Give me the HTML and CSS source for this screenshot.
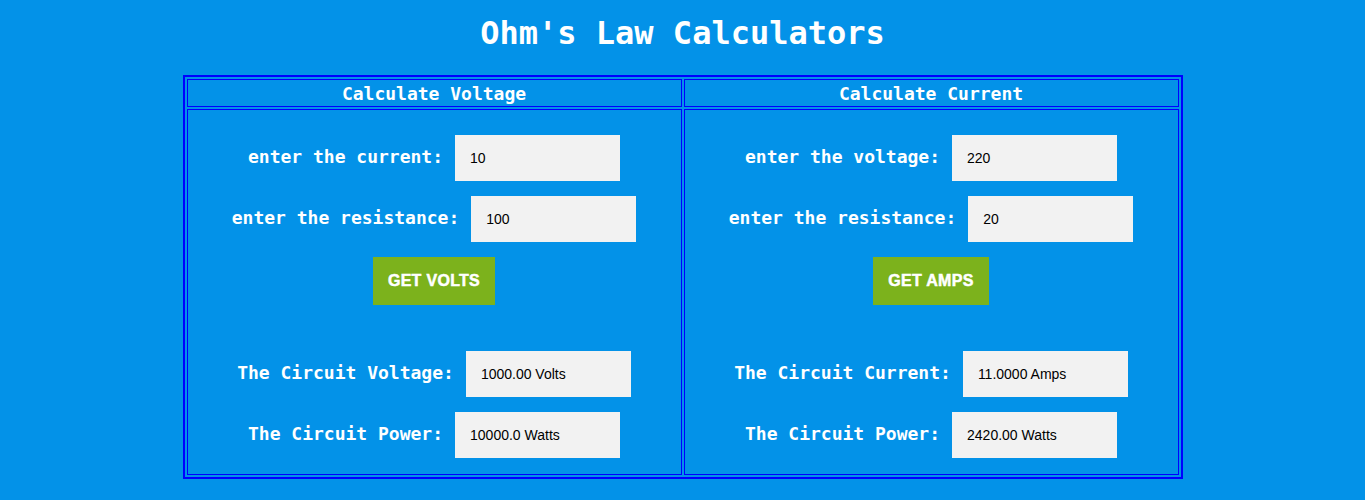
FILE: index.html
```html
<!DOCTYPE html>
<html>
<head>
<meta charset="utf-8">
<title>Ohm's Law Calculators</title>
<link rel="stylesheet" href="styles.css">
</head>
<body>
<h1 class="title">Ohm's Law Calculators</h1>
<table class="calc">
  <tr>
    <th class="head">Calculate Voltage</th>
    <th class="head">Calculate Current</th>
  </tr>
  <tr>
    <td class="cell">
      <div class="form">
        <div class="row"><label class="label">enter the current:</label><input class="field" type="text" value="10"></div>
        <div class="row"><label class="label">enter the resistance:</label><input class="field" type="text" value="100"></div>
        <div class="row btn-row"><button class="btn">GET VOLTS</button></div>
        <div class="row"><label class="label">The Circuit Voltage:</label><input class="field" type="text" value="1000.00 Volts"></div>
        <div class="row"><label class="label">The Circuit Power:</label><input class="field" type="text" value="10000.0 Watts"></div>
      </div>
    </td>
    <td class="cell">
      <div class="form">
        <div class="row"><label class="label">enter the voltage:</label><input class="field" type="text" value="220"></div>
        <div class="row"><label class="label">enter the resistance:</label><input class="field" type="text" value="20"></div>
        <div class="row btn-row"><button class="btn">GET AMPS</button></div>
        <div class="row"><label class="label">The Circuit Current:</label><input class="field" type="text" value="11.0000 Amps"></div>
        <div class="row"><label class="label">The Circuit Power:</label><input class="field" type="text" value="2420.00 Watts"></div>
      </div>
    </td>
  </tr>
</table>
</body>
</html>
```
FILE: styles.css
```css
html, body {
  margin: 0;
  padding: 0;
  background: #0392e8;
  height: 100%;
}
body {
  font-family: "DejaVu Sans Mono", monospace;
  color: #ffffff;
}
.title {
  margin: 15px 0 23px;
  font-size: 32px;
  line-height: 37px;
  font-weight: bold;
  text-align: center;
}
.calc {
  width: 1000px;
  margin: 0 auto;
  border: 2px solid #0000ff;
  border-spacing: 2px;
  table-layout: fixed;
}
.head {
  border: 1px solid #0000ff;
  padding: 3px 0 1px;
  height: 22px;
  line-height: 22px;
  font-size: 18px;
  font-weight: bold;
  text-align: center;
}
.cell {
  border: 1px solid #0000ff;
  padding: 25px 0 16px;
  vertical-align: top;
}
.form {
  display: flex;
  flex-direction: column;
  gap: 15px;
}
.row {
  display: flex;
  justify-content: center;
  align-items: center;
  gap: 12px;
}
.btn-row {
  margin-bottom: 31px;
}
.label {
  font-size: 18px;
  font-weight: bold;
  white-space: nowrap;
  padding-bottom: 3px;
}
.field {
  width: 165px;
  height: 46px;
  box-sizing: border-box;
  border: none;
  padding: 0 15px;
  margin: 0;
  background: #f2f2f2;
  font-family: "Liberation Sans", Arial, sans-serif;
  font-size: 14px;
  color: #000000;
  outline: none;
}
.btn {
  height: 48px;
  padding: 0 15px;
  border: none;
  background: #7cb21c;
  color: #ffffff;
  font-family: "Liberation Sans", Arial, sans-serif;
  font-size: 16px;
  font-weight: bold;
  letter-spacing: 0.3px;
  -webkit-text-stroke: 0.5px #ffffff;
  text-transform: uppercase;
}
```
